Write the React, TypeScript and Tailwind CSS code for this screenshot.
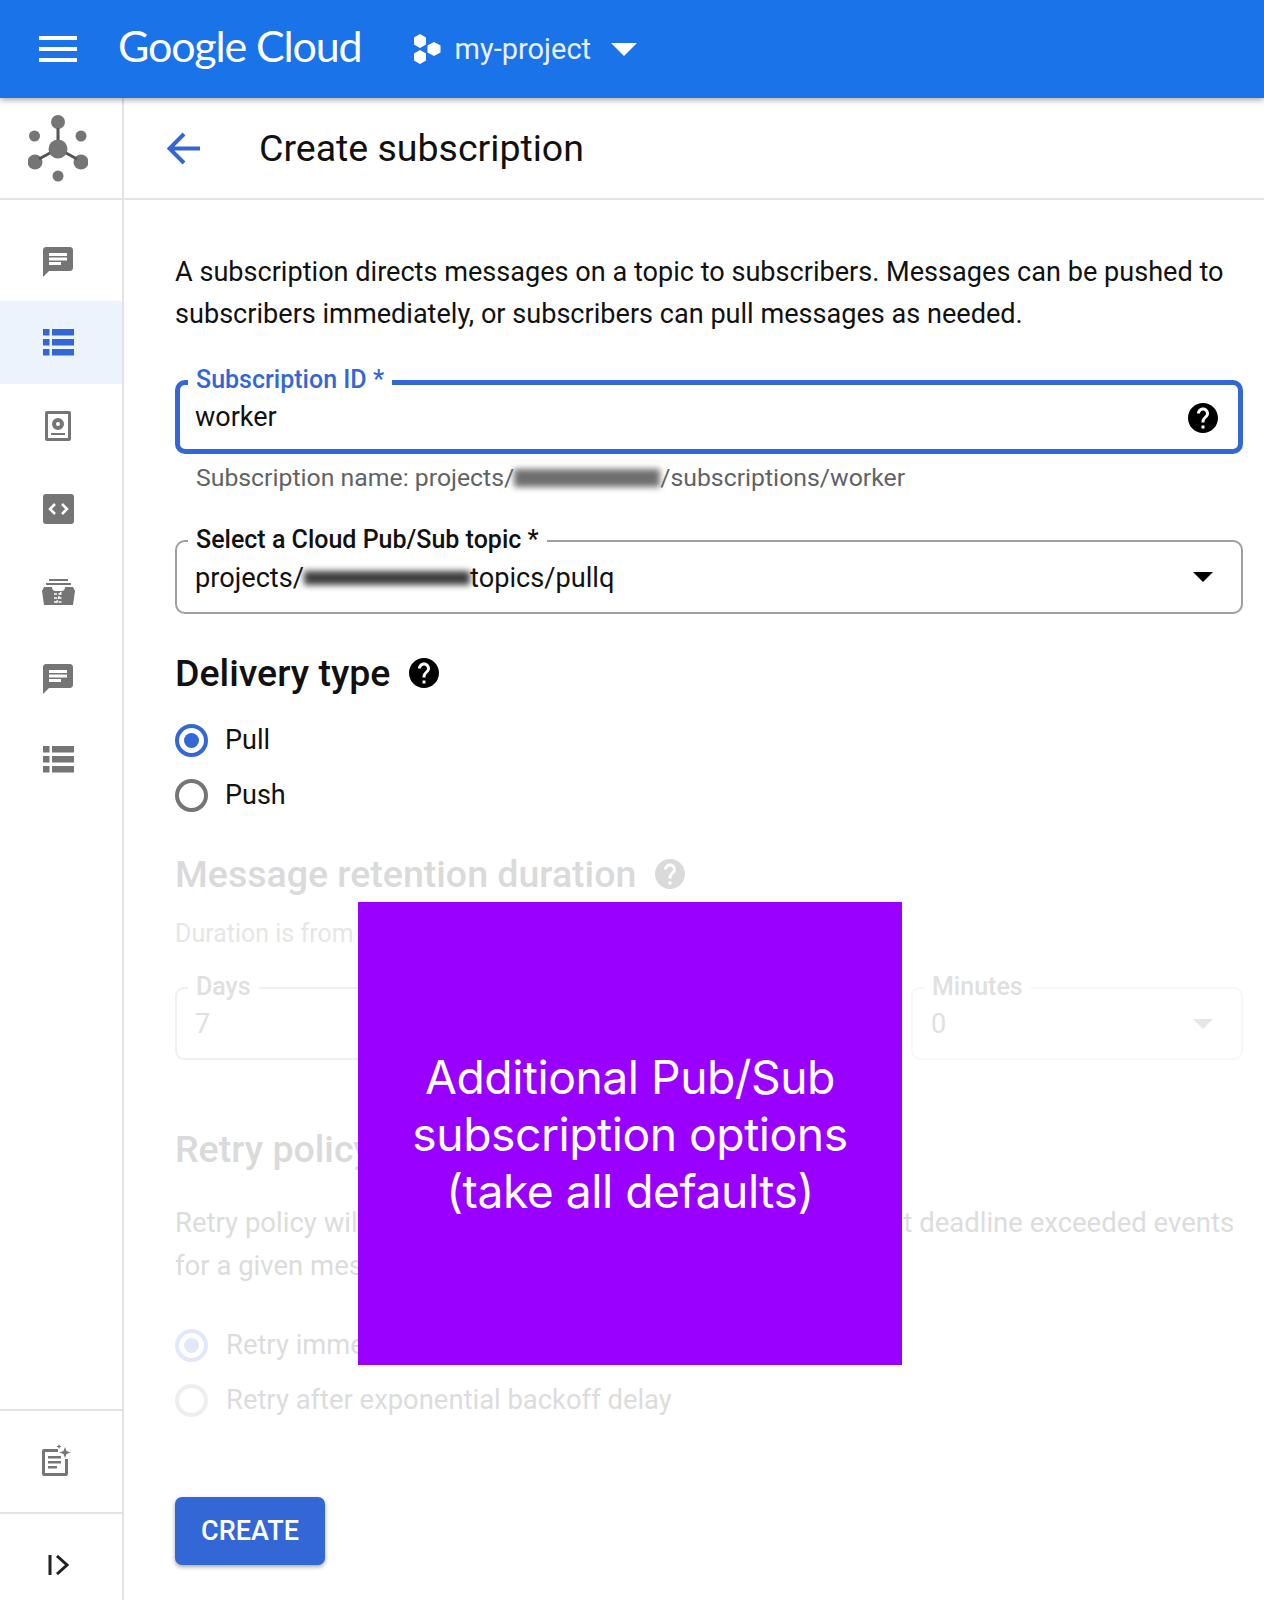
const HELP = "M12 2C6.48 2 2 6.48 2 12s4.48 10 10 10 10-4.48 10-10S17.52 2 12 2zm1 17h-2v-2h2v2zm2.07-7.75l-.9.92C13.45 12.9 13 13.5 13 15h-2v-.5c0-1.1.45-2.1 1.17-2.83l1.24-1.26c.37-.36.59-.86.59-1.41 0-1.1-.9-2-2-2s-2 .9-2 2H8c0-2.21 1.79-4 4-4s4 1.79 4 4c0 .88-.36 1.68-.93 2.25z";
const CHAT = "M20 2H4c-1.1 0-2 .9-2 2v18l4-4h14c1.1 0 2-.9 2-2V4c0-1.1-.9-2-2-2zM6 9h12v2H6V9zm8 5H6v-2h8v2zm4-6H6V6h12v2z";

function Help({ className }: { className: string }) {
  return (
    <svg viewBox="2 2 20 20" className={className} fill="currentColor">
      <path d={HELP} />
    </svg>
  );
}

function Caret({ className }: { className: string }) {
  return (
    <svg viewBox="0 0 20 10" className={className} fill="currentColor">
      <path d="M0 0h20L10 10z" />
    </svg>
  );
}

function NavChat() {
  return (
    <svg viewBox="2 2 20 20" className="w-[30px] h-[30px] mt-[6px]" fill="currentColor">
      <path d={CHAT} />
    </svg>
  );
}

function NavList() {
  return (
    <svg viewBox="0 0 31 27" className="w-[31px] h-[27px]" fill="currentColor">
      <path d="M0 0h6.500v6.500H0zM9 0h22v6.500H9zM0 10h6.500v6.500H0zM9 10h22v6.500H9zM0 20h6.500v6.500H0zM9 20h22v6.500H9z" />
    </svg>
  );
}

function NavItem({ active, children }: { active?: boolean; children: React.ReactNode }) {
  return (
    <div className={active ? "h-[83.5px] flex items-center justify-center pr-[6px] bg-[#edf3fc] text-[#3367d6]" : "h-[83.5px] flex items-center justify-center pr-[6px] text-[#757575]"}>
      {children}
    </div>
  );
}

function Radio({ on, faded, label }: { on?: boolean; faded?: boolean; label: string }) {
  const ring = on ? (faded ? "border-[#dfe9f9]" : "border-[#3367d6]") : faded ? "border-[#eeeeee]" : "border-[#757575]";
  return (
    <div className="flex items-center h-[55px]">
      <div className={`w-[33px] h-[33px] rounded-full border-[4px] flex items-center justify-center ${ring}`}>
        {on && <div className={faded ? "w-[15px] h-[15px] rounded-full bg-[#dfe9f9]" : "w-[15px] h-[15px] rounded-full bg-[#3367d6]"} />}
      </div>
      <span className={faded ? "ml-[18px] text-[27.4px] text-[#dcdcdc]" : "ml-[17px] text-[27px] text-[#111111]"}>{label}</span>
    </div>
  );
}

function Faint({ label, value, caret, border }: { label: string; value: string; caret?: boolean; border: string }) {
  return (
    <div className={`relative h-[73px] rounded-[9px] border-2 ${border} flex items-center pl-[18px] pr-[28px] justify-between`}>
      <span className="absolute -top-[17px] left-[11px] bg-white px-2 text-[25px] leading-[30px] font-medium text-[#e0e0e0]">{label}</span>
      <span className="text-[27px] mt-[2px] text-[#e0e0e0]">{value}</span>
      {caret && <Caret className="w-[20px] h-[10px] text-[#e6e6e6]" />}
    </div>
  );
}

export default function App() {
  return (
    <div className="relative w-[1264px] h-[1600px] overflow-hidden bg-white flex flex-col font-['Roboto',sans-serif]">
      <header className="relative z-10 h-[98px] shrink-0 bg-[#1a73e8] shadow-[0_2px_6px_rgba(0,0,0,0.35)] flex items-center text-white">
        <svg viewBox="0 0 38 26" className="ml-[39px] w-[38px] h-[26px]" fill="currentColor">
          <rect y="0" width="38" height="4" />
          <rect y="11" width="38" height="4" />
          <rect y="22" width="38" height="4" />
        </svg>
        <span className="ml-[41px] text-[43px] tracking-[-1.150px] leading-none -mt-[8px] font-['Lato',sans-serif]">Google Cloud</span>
        <svg viewBox="0 0 28 30" className="ml-[51px] w-[28px] h-[30px]" fill="currentColor">
          <path d="M7 0l6 3.500v7L7 14 1 10.500v-7zM7 16l6 3.500v7L7 30l-6-3.500v-7zM21 8l6.500 3.500v7L21 22l-6.500-3.500v-7z" />
        </svg>
        <span className="ml-[14px] mt-[2px] text-[29px] text-[#e8f0fe]">my-project</span>
        <Caret className="ml-[20px] w-[26px] h-[13px]" />
      </header>

      <div className="flex-1 flex min-h-0">
        <aside className="w-[124px] shrink-0 border-r-2 border-[#e3e3e3] flex flex-col">
          <div className="h-[102px] shrink-0 border-b-2 border-[#e3e3e3] flex items-center justify-center pr-[6px]">
            <svg viewBox="28 115 60 68" className="w-[60px] h-[68px] mt-[2px]" fill="#757575" stroke="none">
              <circle cx="58" cy="122" r="7" />
              <circle cx="58" cy="149" r="9.500" />
              <circle cx="34.500" cy="136" r="5.500" />
              <circle cx="81" cy="136" r="5.500" />
              <circle cx="35" cy="162" r="7.500" />
              <circle cx="81" cy="162" r="7.500" />
              <circle cx="58" cy="176" r="5.500" />
              <path d="M58 128v12M50 153l-11 6M66 153l11 6" stroke="#555555" strokeWidth="3" />
            </svg>
          </div>
          <div className="pt-[17px]">
            <NavItem><NavChat /></NavItem>
            <NavItem active><NavList /></NavItem>
            <NavItem>
              <svg viewBox="0 0 26 30" className="w-[26px] h-[30px]" fill="currentColor">
                <path fillRule="evenodd" d="M2 0h22a2 2 0 0 1 2 2v26a2 2 0 0 1-2 2H2a2 2 0 0 1-2-2V2a2 2 0 0 1 2-2zm1 3v24h20V3z" />
                <path fillRule="evenodd" d="M13 7a6 6 0 1 1 0 12 6 6 0 0 1 0-12zm0 4a2 2 0 1 0 0 4 2 2 0 0 0 0-4z" />
                <rect x="6" y="22" width="14" height="2" />
              </svg>
            </NavItem>
            <NavItem>
              <svg viewBox="0 0 31 30" className="w-[31px] h-[30px]">
                <rect width="31" height="30" rx="3" fill="currentColor" />
                <path d="M12 10l-5 5 5 5M19 10l5 5-5 5" fill="none" stroke="#ffffff" strokeWidth="2.500" />
              </svg>
            </NavItem>
            <NavItem>
              <svg viewBox="0 0 33 26" className="w-[33px] h-[26px] mb-[2px]" fill="currentColor">
                <rect x="7" y="0" width="19" height="2" />
                <rect x="4" y="4" width="25" height="2" />
                <path d="M2 8h8c0 3 2 4 3 4h7c1 0 3-1 3-4h8l2 4-2 14H2L0 12z" />
                <path d="M12 15h9M12 19h9M12 23h9M19 13l-5 12" stroke="#ffffff" strokeWidth="1.500" fill="none" strokeDasharray="3 1.500" />
              </svg>
            </NavItem>
            <NavItem><NavChat /></NavItem>
            <NavItem><NavList /></NavItem>
          </div>
          <div className="mt-auto">
            <div className="h-[103px] border-t-2 border-[#e3e3e3] flex items-center justify-center pr-[10px] text-[#757575]">
              <svg viewBox="0 0 30 32" className="w-[30px] h-[32px] mb-[4px]" fill="currentColor">
                <path fillRule="evenodd" d="M3 5h14v3H4v21h20V15h3v15a2 2 0 0 1-2 2H3a2 2 0 0 1-2-2V7a2 2 0 0 1 2-2z" />
                <rect x="7" y="12" width="13" height="2.500" />
                <rect x="7" y="17" width="13" height="2.500" />
                <rect x="7" y="22" width="9" height="2.500" />
                <path d="M24 3l1.500 4 4 1.500-4 1.500-1.500 4-1.500-4-4-1.500 4-1.500zM18 0l.8 1.700 1.700.8-1.700.8-.8 1.700-.8-1.700-1.700-.8 1.700-.8z" />
              </svg>
            </div>
            <div className="h-[88px] border-t-2 border-[#e3e3e3] flex items-start pt-[41px] justify-center pr-[4px]">
              <svg viewBox="0 0 22 20" className="w-[22px] h-[20px]" fill="none" stroke="#202124" strokeWidth="3">
                <path d="M2 0v20M9 1l10 9-10 9" />
              </svg>
            </div>
          </div>
        </aside>

        <main className="flex-1 min-w-0 flex flex-col">
          <div className="h-[102px] shrink-0 border-b-2 border-[#e3e3e3] flex items-center">
            <svg viewBox="0 0 33 33" className="ml-[43px] w-[33px] h-[33px]" fill="none" stroke="#3367d6" strokeWidth="4">
              <path d="M33 16.500H3M17 2L2.500 16.500 17 31" />
            </svg>
            <h1 className="ml-[59px] text-[37.500px] text-[#111111] font-normal">Create subscription</h1>
          </div>

          <div className="pl-[51px] pr-[21px] pt-[51px]">
            <p className="text-[27.1px] leading-[42px] text-[#111111]">
              A subscription directs messages on a topic to subscribers. Messages can be pushed to subscribers immediately, or subscribers can pull messages as needed.
            </p>

            <div className="relative mt-[45px] h-[74px] rounded-[10px] border-[5px] border-[#3367d6] flex items-center justify-between pl-[15px] pr-[20px]">
              <span className="absolute -top-[21px] left-[8px] bg-white px-2 text-[25px] leading-[32px] font-medium text-[#3367d6]">Subscription ID *</span>
              <span className="text-[27px] text-[#111111]">worker</span>
              <Help className="w-[30px] h-[30px] text-black mt-[1px]" />
            </div>

            <div className="relative pl-[21px] mt-[9px] h-[30px] flex items-center text-[24.8px] text-[#5f6368]">
              <span>Subscription name: projects/</span>
              <span className="w-[146px] h-[18px] bg-[#6e6e6e] blur-[3px]" />
              <span>/subscriptions/worker</span>
            </div>

            <div className="relative mt-[47px] h-[74px] rounded-[10px] border-2 border-[#9e9e9e] flex items-center justify-between pl-[18px] pr-[28px]">
              <span className="absolute -top-[17px] left-[11px] bg-white px-2 text-[25px] leading-[30px] font-medium text-[#111111]">Select a Cloud Pub/Sub topic *</span>
              <span className="flex items-center mt-[3px] text-[27.2px] text-[#111111]">
                <span>projects/</span>
                <span className="w-[166px] h-[14px] bg-[#3f3f3f] blur-[3px]" />
                <span>topics/pullq</span>
              </span>
              <Caret className="w-[20px] h-[10px] text-black" />
            </div>

            <div className="mt-[36px] h-[46px] flex items-center">
              <h2 className="text-[37.500px] font-medium text-[#111111]">Delivery type</h2>
              <Help className="ml-[19px] w-[30px] h-[30px] text-black" />
            </div>

            <div className="mt-[17px]">
              <Radio on label="Pull" />
              <Radio label="Push" />
            </div>

            <div className="mt-[28px] h-[46px] flex items-center">
              <h2 className="text-[37.500px] font-medium text-[#dadada]">Message retention duration</h2>
              <Help className="ml-[19px] w-[30px] h-[30px] text-[#dadada]" />
            </div>

            <p className="mt-[21px] text-[25px] leading-[32px] text-[#e6e6e6]">Duration is from 10 minutes to 7 days</p>

            <div className="mt-[37px] grid grid-cols-3 gap-[36px]">
              <Faint label="Days" value="7" border="border-[#f0f0f0]" />
              <Faint label="Hours" value="0" caret border="border-[#f5f5f5]" />
              <Faint label="Minutes" value="0" caret border="border-[#f7f7f7]" />
            </div>

            <h2 className="mt-[66px] h-[46px] flex items-center text-[37.500px] font-medium text-[#dadada]">Retry policy</h2>

            <p className="mt-[29px] text-[27.5px] leading-[43px] text-[#dcdcdc]">
              Retry policy will be triggered on NACKs or acknowledgement deadline exceeded events for a given message.
            </p>

            <div className="mt-[31px]">
              <Radio on faded label="Retry immediately" />
              <Radio faded label="Retry after exponential backoff delay" />
            </div>

            <button className="mt-[69px] w-[150px] h-[68px] rounded-[7px] bg-[#3367d6] text-white text-[27px] font-medium shadow-[0_2px_4px_rgba(0,0,0,0.35)]">CREATE</button>
          </div>
        </main>
      </div>

      <div className="absolute left-[358px] top-[902px] w-[544px] h-[463px] bg-[#9900ff] flex items-center justify-center pt-[2px] text-center text-white text-[46.300px] leading-[57px] tracking-[-0.5px] font-['Inter',sans-serif] font-normal">
        <p>Additional Pub/Sub<br />subscription options<br />(take all defaults)</p>
      </div>
    </div>
  );
}
